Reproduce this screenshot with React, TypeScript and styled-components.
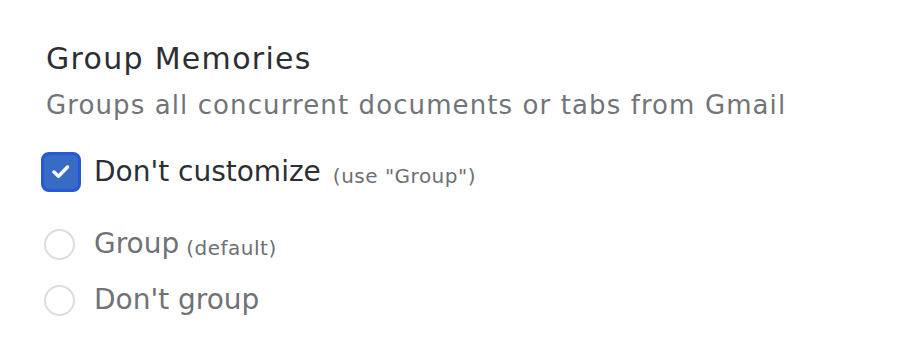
import React, { useState } from "react";
import styled, { createGlobalStyle } from "styled-components";

const GlobalStyle = createGlobalStyle`
  html, body {
    margin: 0;
    padding: 0;
    background: #ffffff;
  }
  body {
    font-family: "DejaVu Sans", "Noto Sans", sans-serif;
    -webkit-font-smoothing: antialiased;
  }
`;

type Choice = "custom" | "group" | "none";

const App = () => {
  const [choice, setChoice] = useState<Choice>("custom");

  return (
    <>
      <GlobalStyle />
      <Page>
        <Title>Group Memories</Title>
        <Subtitle>Groups all concurrent documents or tabs from Gmail</Subtitle>

        <CheckRow onClick={() => setChoice(choice === "custom" ? "group" : "custom")}>
          <CheckBox $checked={choice === "custom"}>
            {choice === "custom" && (
              <svg width="40" height="40" viewBox="0 0 40 40">
                <path
                  d="M13 20 L17.5 24.2 L26.5 15"
                  fill="none"
                  stroke="#ffffff"
                  strokeWidth="3.4"
                  strokeLinecap="round"
                  strokeLinejoin="round"
                />
              </svg>
            )}
          </CheckBox>
          <MainLabel>Don't customize</MainLabel>
          <Hint $gap={12}>(use "Group")</Hint>
        </CheckRow>

        <RadioList>
          <RadioRow onClick={() => setChoice("group")}>
            <Radio $selected={choice === "group"} />
            <RadioLabel>Group</RadioLabel>
            <Hint $gap={7}>(default)</Hint>
          </RadioRow>
          <RadioRow onClick={() => setChoice("none")}>
            <Radio $selected={choice === "none"} />
            <RadioLabel>Don't group</RadioLabel>
          </RadioRow>
        </RadioList>
      </Page>
    </>
  );
};

export default App;

const Page = styled.div`
  display: flex;
  flex-direction: column;
  padding: 39px 0 0 46px;
`;

const Title = styled.h2`
  margin: 0;
  font-size: 30px;
  line-height: 40px;
  font-weight: 400;
  letter-spacing: 1.3px;
  color: #2b2f33;
`;

const Subtitle = styled.p`
  margin: 8px 0 0;
  font-size: 26px;
  line-height: 36px;
  letter-spacing: 1.1px;
  color: #717478;
`;

const CheckRow = styled.div`
  display: flex;
  align-items: center;
  margin: 29px 0 0 -5px;
  cursor: pointer;
`;

const CheckBox = styled.span<{ $checked: boolean }>`
  position: relative;
  box-sizing: border-box;
  width: 40px;
  height: 40px;
  flex-shrink: 0;
  border-radius: 8px;
  border: 3px solid ${({ $checked }) => ($checked ? "#2657d4" : "#dcdcdc")};
  background: ${({ $checked }) => ($checked ? "#386cc4" : "#ffffff")};

  svg {
    position: absolute;
    left: -3px;
    top: -3px;
  }
`;

const MainLabel = styled.span`
  margin-left: 13px;
  font-size: 28px;
  line-height: 40px;
  color: #2b2f33;
`;

const Hint = styled.span<{ $gap: number }>`
  margin-left: ${({ $gap }) => $gap + "px"};
  margin-top: 8px;
  font-size: 20px;
  line-height: 28px;
  letter-spacing: 0.5px;
  color: #6c6f73;
`;

const RadioList = styled.div`
  display: flex;
  flex-direction: column;
  gap: 22px;
  margin: 35px 0 0 -2px;
`;

const RadioRow = styled.div`
  display: flex;
  align-items: center;
  height: 34px;
  cursor: pointer;
`;

const Radio = styled.span<{ $selected: boolean }>`
  box-sizing: border-box;
  width: 31px;
  height: 31px;
  flex-shrink: 0;
  border-radius: 50%;
  border: 2px solid ${({ $selected }) => ($selected ? "#2657d4" : "#dddddd")};
  background: ${({ $selected }) => ($selected ? "#386cc4" : "#ffffff")};
`;

const RadioLabel = styled.span`
  margin-left: 19px;
  font-size: 28px;
  line-height: 34px;
  color: #6f7276;
`;
